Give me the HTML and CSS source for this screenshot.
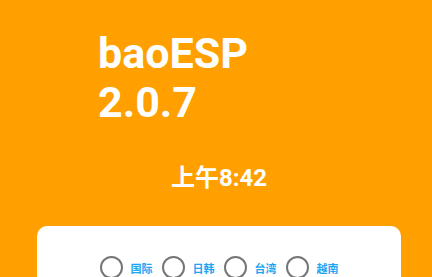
FILE: index.html
```html
<!DOCTYPE html>
<html lang="zh">
<head>
  <meta charset="UTF-8" />
  <meta name="viewport" content="width=device-width, initial-scale=1.0"/>
  <title>baoESP</title>
  <link rel="stylesheet" href="styles.css">
</head>
<body>
  <div class="screen">
    <h1 class="title">baoESP<br>2.0.7</h1>
    <div class="clock">上午8:42</div>

    <div class="card">
      <div class="regions">
        <label class="region"><span class="radio"></span><span class="region-name">国际</span></label>
        <label class="region"><span class="radio"></span><span class="region-name">日韩</span></label>
        <label class="region"><span class="radio"></span><span class="region-name">台湾</span></label>
        <label class="region"><span class="radio"></span><span class="region-name">越南</span></label>
      </div>
    </div>
  </div>
</body>
</html>
```

FILE: styles.css
```css
body {
  margin: 0;
  background-color: #ffa000;
  font-family: Roboto, "Noto Sans CJK SC", sans-serif;
  overflow: hidden;
}

.screen {
  display: flex;
  flex-direction: column;
  height: 277px;
}

.title {
  margin: 0;
  padding: 29px 0 0 98px;
  font-size: 43px;
  line-height: 49px;
  font-weight: 700;
  color: #fff;
}

.clock {
  margin-top: 37px;
  text-align: center;
  font-size: 24px;
  line-height: 28px;
  font-weight: 700;
  color: #fff;
  padding-left: 6px;
}

.card {
  margin: 34px 31px 0 37px;
  flex: 1;
  background: #fff;
  border-radius: 10px 10px 0 0;
  padding-top: 30px;
}

.regions {
  display: flex;
  justify-content: center;
  gap: 9px;
}

.region {
  display: flex;
  align-items: center;
  gap: 8px;
}

.radio {
  width: 19px;
  height: 19px;
  border: 2px solid #757575;
  border-radius: 50%;
}

.region-name {
  font-size: 11px;
  font-weight: 700;
  color: #1ea5f4;
}
```
